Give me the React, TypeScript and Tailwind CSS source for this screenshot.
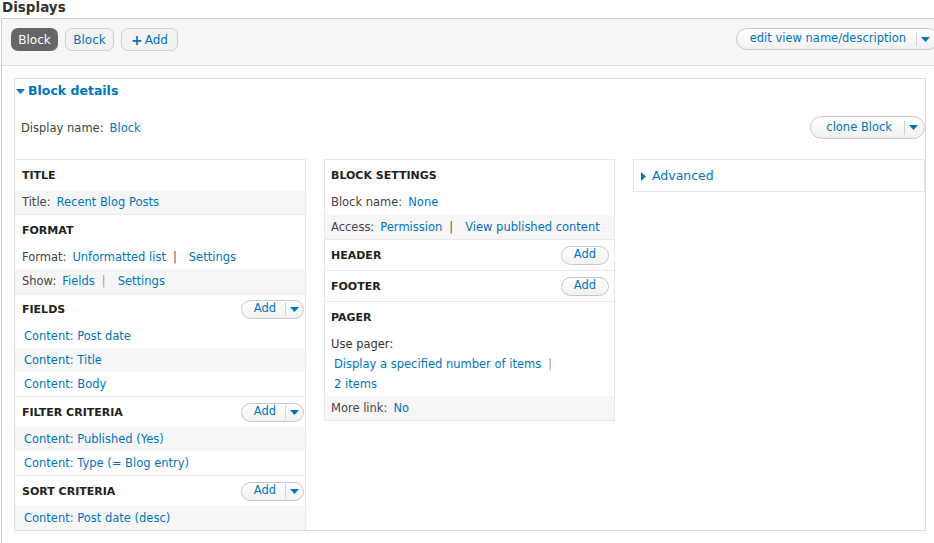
import React from 'react';

const Caret: React.FC<{ dir?: 'down' | 'right'; className?: string }> = ({ dir = 'down', className = '' }) =>
  dir === 'down' ? (
    <svg width="9" height="5" viewBox="0 0 9 5" className={className}>
      <path d="M0 0h9L4.5 5z" fill="currentColor" />
    </svg>
  ) : (
    <svg width="5" height="9" viewBox="0 0 5 9" className={className}>
      <path d="M0 0v9l5-4.5z" fill="currentColor" />
    </svg>
  );

// rounded button with a caret part on the right
const SplitButton: React.FC<{ label: string; className?: string; textClass?: string; caretClass?: string }> = ({
  label,
  className = '',
  textClass = 'pl-[13px] pr-[10px]',
  caretClass = 'pl-[4px] pr-[6px]',
}) => (
  <div
    className={`flex items-center rounded-full border border-[#c8c8c8] bg-linear-to-b from-white to-[#f1f1f1] ${className}`}
  >
    <span className={`text-[#0074bd] ${textClass}`}>{label}</span>
    <span className="h-[14px] w-px bg-[#d4d4d4]" />
    <span className={`text-[#0074bd] ${caretClass}`}>
      <Caret />
    </span>
  </div>
);

const AddSplit: React.FC = () => (
  <SplitButton
    label="Add"
    className="mr-px h-[19px]"
    textClass="pl-[12px] pr-[9px]"
    caretClass="pl-[4px] pr-[4px]"
  />
);

const AddButton: React.FC = () => (
  <div className="mr-[5px] flex h-[19px] w-[48px] items-center justify-center rounded-full border border-[#c8c8c8] bg-linear-to-b from-white to-[#f1f1f1] text-[#0074bd]">
    Add
  </div>
);

const Section: React.FC<{
  title: string;
  button?: React.ReactNode;
  first?: boolean;
  inset?: string;
  children?: React.ReactNode;
}> = ({ title, button, first, inset = 'pl-[7px]', children }) => (
  <div className={first ? '' : 'border-t border-[#e8e8e8]'}>
    <div className={`flex h-[30px] items-center justify-between ${inset}`}>
      <span className="pt-[2px] text-[11px] font-bold uppercase text-[#222]">{title}</span>
      {button}
    </div>
    {children}
  </div>
);

const Row: React.FC<{ gray?: boolean; tall?: boolean; inset?: string; children: React.ReactNode }> = ({
  gray,
  tall,
  inset = 'px-[7px]',
  children,
}) => (
  <div
    className={`flex items-center pt-[2px] ${inset} ${tall ? 'h-[25px]' : 'h-[24px]'} ${gray ? 'bg-[#f6f6f6]' : ''}`}
  >
    {children}
  </div>
);

const Label: React.FC<{ children: React.ReactNode }> = ({ children }) => (
  <span className="mr-[6px] text-[#444]">{children}</span>
);

const Link: React.FC<{ children: React.ReactNode; className?: string }> = ({ children, className = '' }) => (
  <span className={`text-[#0074bd] ${className}`}>{children}</span>
);

const Pipe: React.FC<{ orange?: boolean }> = ({ orange }) => (
  <span className={`ml-[7px] mr-[12px] ${orange ? 'text-[#d9924f]' : 'text-[#555]'}`}>|</span>
);

const App: React.FC = () => {
  const fields = ['Content: Post date', 'Content: Title', 'Content: Body'];
  const filters = ['Content: Published (Yes)', 'Content: Type (= Blog entry)'];

  return (
    <div className="min-h-screen overflow-hidden bg-white font-['DejaVu_Sans',sans-serif] text-[11.5px] text-[#333]">
      <h2 className="h-[18px] pl-[2px] text-[13.5px] font-bold leading-[14px] text-[#333]">Displays</h2>

      <div className="ml-px w-[945px] border-l border-t border-[#cfcfcf]">
        {/* display tabs bar */}
        <div className="flex h-[47px] items-start justify-between border-b border-[#ddd] bg-[#f6f6f6] pl-[9px] pr-[9px] pt-[9px]">
          <div className="flex gap-[7px] text-[12px]">
            <div className="flex h-[23px] w-[47px] items-center justify-center rounded-[7px] bg-[#666] text-white">
              Block
            </div>
            <div className="flex h-[23px] w-[49px] items-center justify-center rounded-[7px] border border-[#cfcfcf] bg-[#f3f3f3] text-[#0074bd]">
              Block
            </div>
            <div className="flex h-[23px] w-[57px] items-center justify-center rounded-[7px] border border-[#cfcfcf] bg-[#f3f3f3] text-[#0074bd]">
              <span className="mr-[2px] text-[14px] font-bold leading-none">+</span>Add
            </div>
          </div>
          <SplitButton
            label="edit view name/description"
            className="mr-[-2px] h-[22px] text-[11.5px]"
            caretClass="pl-[4px] pr-[8px]"
          />
        </div>

        <div className="pl-[12px] pt-[12px]">
          <div className="w-[912px] border border-[#dcdcdc]">
            <div className="flex h-[24px] items-center pl-[1px] text-[12.5px] font-bold text-[#0074bd]">
              <Caret className="mr-[3px]" />
              Block details
            </div>

            <div className="flex items-start justify-between pb-[20px] pt-[13px]">
              <div className="flex h-[23px] items-center pl-[6px] pt-[2px]">
                <Label>Display name:</Label>
                <Link>Block</Link>
              </div>
              <SplitButton label="clone Block" className="h-[23px]" textClass="pl-[15px] pr-[12px]" />
            </div>

            <div className="grid grid-cols-[291px_291px_292px] items-start gap-x-[18px]">
              {/* left column */}
              <div className="border-r border-t border-[#e8e8e8]">
                <Section title="Title" first>
                  <Row gray>
                    <Label>Title:</Label>
                    <Link>Recent Blog Posts</Link>
                  </Row>
                </Section>
                <Section title="Format">
                  <Row>
                    <Label>Format:</Label>
                    <Link>Unformatted list</Link>
                    <Pipe />
                    <Link>Settings</Link>
                  </Row>
                  <Row gray>
                    <Label>Show:</Label>
                    <Link>Fields</Link>
                    <Pipe orange />
                    <Link>Settings</Link>
                  </Row>
                </Section>
                <Section title="Fields" button={<AddSplit />}>
                  {fields.map((f, i) => (
                    <Row key={f} gray={i % 2 === 1}>
                      <Link className="pl-[2px]">{f}</Link>
                    </Row>
                  ))}
                </Section>
                <Section title="Filter criteria" button={<AddSplit />}>
                  {filters.map((f, i) => (
                    <Row key={f} gray={i % 2 === 0}>
                      <Link className="pl-[2px]">{f}</Link>
                    </Row>
                  ))}
                </Section>
                <Section title="Sort criteria" button={<AddSplit />}>
                  <Row gray>
                    <Link className="pl-[2px]">Content: Post date (desc)</Link>
                  </Row>
                </Section>
              </div>

              {/* middle column */}
              <div className="border border-[#e8e8e8]">
                <Section title="Block settings" first inset="pl-[6px]">
                  <Row inset="px-[6px]">
                    <Label>Block name:</Label>
                    <Link>None</Link>
                  </Row>
                  <Row gray tall inset="px-[6px]">
                    <Label>Access:</Label>
                    <Link>Permission</Link>
                    <Pipe />
                    <Link>View published content</Link>
                  </Row>
                </Section>
                <Section title="Header" button={<AddButton />} inset="pl-[6px]" />
                <Section title="Footer" button={<AddButton />} inset="pl-[6px]" />
                <Section title="Pager" inset="pl-[6px]">
                  <div className="px-[6px] pb-[2px] pt-[2px] leading-[20px]">
                    <div>Use pager:</div>
                    <div className="pl-[3px]">
                      <Link>Display a specified number of items</Link>
                      <span className="ml-[7px] text-[#d9924f]">|</span>
                    </div>
                    <div className="pl-[3px]">
                      <Link>2 items</Link>
                    </div>
                  </div>
                  <Row gray inset="px-[6px]">
                    <Label>More link:</Label>
                    <Link>No</Link>
                  </Row>
                </Section>
              </div>

              {/* right column */}
              <div className="flex h-[33px] items-center border border-[#e8e8e8] pl-[7px] pt-[2px] text-[12.5px] text-[#0074bd]">
                <Caret dir="right" className="mr-[6px]" />
                Advanced
              </div>
            </div>
          </div>
          <div className="h-[40px]" />
        </div>
      </div>
    </div>
  );
};

export default App;
